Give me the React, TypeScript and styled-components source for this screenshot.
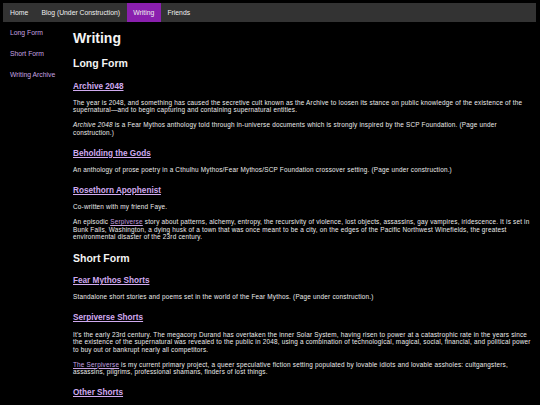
import React from 'react';
import styled, { createGlobalStyle } from 'styled-components';

const navItems = [
  { id: 0, name: 'Home' },
  { id: 1, name: 'Blog (Under Construction)' },
  { id: 2, name: 'Writing' },
  { id: 3, name: 'Friends' },
];

const sideLinks = ['Long Form', 'Short Form', 'Writing Archive'];

function App() {
  const active = 2;

  return (
    <Page>
      <GlobalStyle />
      <NavBar>
        {navItems.map((item) => (
          <NavItem key={item.id} isActive={item.id === active}>
            {item.name}
          </NavItem>
        ))}
      </NavBar>
      <Layout>
        <Sidebar>
          {sideLinks.map((name) => (
            <SideLink key={name}>{name}</SideLink>
          ))}
        </Sidebar>
        <Main>
          <Title>Writing</Title>

          <Section>Long Form</Section>

          <WorkTitle>
            <WorkLink>Archive 2048</WorkLink>
          </WorkTitle>
          <Para>
            The year is 2048, and something has caused the secretive cult known as the Archive to
            loosen its stance on public knowledge of the existence of the supernatural—and to begin
            capturing and containing supernatural entities.
          </Para>
          <Para>
            <em>Archive 2048</em> is a Fear Mythos anthology told through in-universe documents
            which is strongly inspired by the SCP Foundation. (Page under construction.)
          </Para>

          <WorkTitle>
            <WorkLink>Beholding the Gods</WorkLink>
          </WorkTitle>
          <Para>
            An anthology of prose poetry in a Cthulhu Mythos/Fear Mythos/SCP Foundation crossover
            setting. (Page under construction.)
          </Para>

          <WorkTitle>
            <WorkLink>Rosethorn Apophenist</WorkLink>
          </WorkTitle>
          <Para>Co-written with my friend Faye.</Para>
          <Para>
            An episodic <InlineLink>Serpiverse</InlineLink> story about patterns, alchemy, entropy,
            the recursivity of violence, lost objects, assassins, gay vampires, iridescence. It is
            set in Bunk Falls, Washington, a dying husk of a town that was once meant to be a city,
            on the edges of the Pacific Northwest Winefields, the greatest environmental disaster of
            the 23rd century.
          </Para>

          <Section>Short Form</Section>

          <WorkTitle>
            <WorkLink>Fear Mythos Shorts</WorkLink>
          </WorkTitle>
          <Para>
            Standalone short stories and poems set in the world of the Fear Mythos. (Page under
            construction.)
          </Para>

          <WorkTitle>
            <WorkLink>Serpiverse Shorts</WorkLink>
          </WorkTitle>
          <Para>
            It's the early 23rd century. The megacorp Durand has overtaken the inner Solar System,
            having risen to power at a catastrophic rate in the years since the existence of the
            supernatural was revealed to the public in 2048, using a combination of technological,
            magical, social, financial, and political power to buy out or bankrupt nearly all
            competitors.
          </Para>
          <Para>
            <InlineLink>The Serpiverse</InlineLink> is my current primary project, a queer
            speculative fiction setting populated by lovable idiots and lovable assholes:
            cultgangsters, assassins, pilgrims, professional shamans, finders of lost things.
          </Para>

          <WorkTitle>
            <WorkLink>Other Shorts</WorkLink>
          </WorkTitle>
        </Main>
      </Layout>
    </Page>
  );
}

export default App;

const GlobalStyle = createGlobalStyle`
*,
*::before,
*::after {
  box-sizing: border-box;
}
html,
body {
  margin: 0;
  padding: 0;
  background: #000;
}
body {
  font-family: "Liberation Sans", Arial, sans-serif;
  color: #ececec;
}
`;

const Page = styled.div`
  padding: 3px 4px 0 3px;
  height: 405px;
  overflow: hidden;
`;

const NavBar = styled.nav`
  display: flex;
  height: 19px;
  background: #333333;
  padding-left: 0.5px;
`;

interface NavItemProps {
  isActive: boolean;
}

const NavItem = styled.a.withConfig({
  shouldForwardProp: (prop) => prop !== 'isActive',
})<NavItemProps>`
  display: flex;
  align-items: center;
  padding: 0 6.6px;
  font-size: 6.8px;
  color: #f0f0f0;
  background: ${(props) => (props.isActive ? '#8a1fae' : 'transparent')};
  cursor: pointer;
`;

const Layout = styled.div`
  display: flex;
`;

const Sidebar = styled.aside`
  width: 70px;
  flex-shrink: 0;
  display: flex;
  flex-direction: column;
  gap: 13px;
  padding: 7px 0 0 7px;
`;

const SideLink = styled.a`
  font-size: 6.8px;
  line-height: 8px;
  color: #c6a3e0;
  cursor: pointer;
`;

const Main = styled.main`
  flex: 1;
  padding-right: 5px;
`;

const Title = styled.h1`
  font-size: 14px;
  line-height: 16px;
  margin: 8px 0 0;
  color: #f4f4f4;
`;

const Section = styled.h2`
  font-size: 10.5px;
  line-height: 12px;
  margin: 11px 0 0;
  color: #f4f4f4;
`;

const WorkTitle = styled.h3`
  font-size: 8.2px;
  line-height: 9.4px;
  margin: 12.5px 0 8px;
`;

const WorkLink = styled.a`
  color: #d0aaf0;
  text-decoration: underline;
  cursor: pointer;
`;

const Para = styled.p`
  font-size: 6.4px;
  line-height: 7.4px;
  letter-spacing: 0.2px;
  margin: 7.6px 0 0;
  color: #ececec;

  h3 + & {
    margin-top: 0;
  }
`;

const InlineLink = styled.a`
  color: #c6a3e0;
  text-decoration: underline;
  cursor: pointer;
`;
